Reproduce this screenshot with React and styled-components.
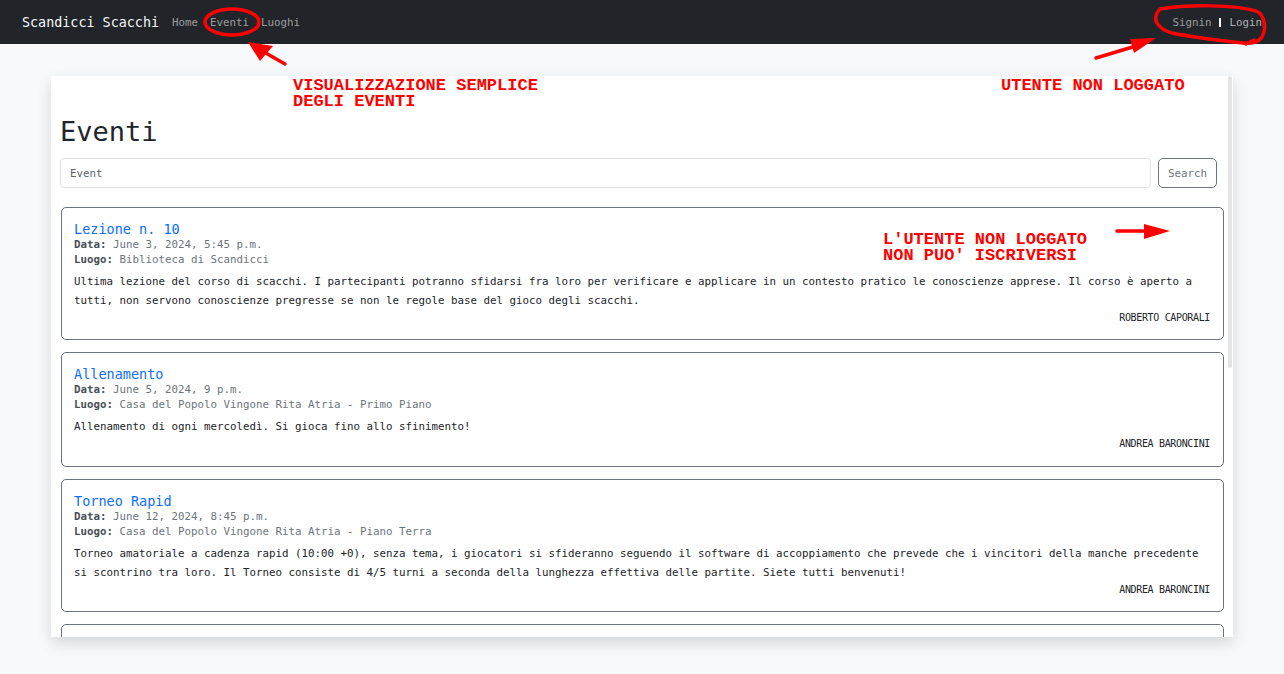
import React from "react";
import styled, { createGlobalStyle } from "styled-components";

const GlobalStyle = createGlobalStyle`
  html, body {
    margin: 0;
    padding: 0;
    background: #f8f9fa;
  }
  body {
    font-family: "DejaVu Sans Mono", "Liberation Mono", monospace;
    color: #212529;
  }
`;

const Page = styled.div`
  position: relative;
  width: 1284px;
  height: 674px;
  overflow: hidden;
`;

const Navbar = styled.nav`
  height: 44px;
  background: #212529;
  display: flex;
  align-items: center;
  padding: 0 22px;
  box-sizing: border-box;
`;

const Brand = styled.span`
  font-size: 13.4px;
  color: #f8f9fa;
  margin-right: 13px;
`;

const NavLinks = styled.div`
  display: flex;
  gap: 12px;
  flex: 1;
`;

const NavLink = styled.span`
  font-size: 10.8px;
  color: ${(props) => (props.light ? "rgba(255,255,255,0.65)" : "rgba(255,255,255,0.55)")};
`;

const AuthLinks = styled.div`
  display: flex;
  align-items: center;
  gap: 8px;
`;

const Divider = styled.span`
  width: 2px;
  height: 9px;
  background: #f8f9fa;
`;

const Main = styled.main`
  padding: 32px 51px 0;
`;

const Panel = styled.div`
  position: relative;
  background: #fff;
  height: 561px;
  box-shadow: 0 6px 14px rgba(0, 0, 0, 0.14);
  overflow: hidden;
`;

const Scroller = styled.div`
  height: 100%;
  overflow-y: auto;
  padding: 40px 9px 0 9px;
  box-sizing: border-box;
  scrollbar-width: none;
  &::-webkit-scrollbar {
    display: none;
  }
`;

/* thin scroll indicator on the panel's right edge */
const ScrollThumb = styled.div`
  position: absolute;
  right: 1px;
  top: 0;
  width: 4px;
  height: 292px;
  border-radius: 2px;
  background: #e4e4e4;
`;

const Title = styled.h1`
  font-size: 27px;
  font-weight: 400;
  line-height: 32px;
  margin: 0 0 10px;
`;

const SearchRow = styled.form`
  display: flex;
  gap: 7px;
  margin: 0 7px 19px 0;
`;

const SearchInput = styled.input`
  flex: 1;
  height: 30px;
  box-sizing: border-box;
  border: 1px solid #dee2e6;
  border-radius: 4px;
  padding: 0 9px;
  font-family: inherit;
  font-size: 10.8px;
  color: #212529;
  &::placeholder {
    color: #5c636a;
  }
`;

const SearchButton = styled.button`
  width: 59px;
  height: 30px;
  border: 1px solid #6c757d;
  border-radius: 5px;
  background: #fff;
  color: #6c757d;
  font-family: inherit;
  font-size: 10.8px;
`;

const CardList = styled.div`
  display: flex;
  flex-direction: column;
  gap: 12px;
  padding: 0 0 20px 1px;
`;

const Card = styled.div`
  border: 1px solid #6c757d;
  border-radius: 5px;
  padding: 14px 13px 13.4px 12px;
`;

const CardTitle = styled.div`
  font-size: 13.5px;
  line-height: 15px;
  color: #0d6efd;
`;

const Meta = styled.div`
  font-size: 10.8px;
  line-height: 15px;
  color: #6c757d;
  b {
    color: #495057;
  }
`;

const Body = styled.p`
  font-size: 10.8px;
  line-height: 19px;
  margin: 5px 0 0;
`;

const Author = styled.div`
  font-size: 10px;
  line-height: 16px;
  text-align: right;
  letter-spacing: -0.35px;
`;

const Note = styled.div`
  position: absolute;
  left: ${(props) => props.x}px;
  top: ${(props) => props.y}px;
  font-family: "Liberation Mono", monospace;
  font-weight: 700;
  font-size: 17px;
  line-height: 16px;
  color: #ff0000;
  white-space: pre;
`;

const Overlay = styled.svg`
  position: absolute;
  left: 0;
  top: 0;
  pointer-events: none;
`;

const events = [
  {
    title: "Lezione n. 10",
    date: "June 3, 2024, 5:45 p.m.",
    place: "Biblioteca di Scandicci",
    text: "Ultima lezione del corso di scacchi. I partecipanti potranno sfidarsi fra loro per verificare e applicare in un contesto pratico le conoscienze apprese. Il corso è aperto a tutti, non servono conoscienze pregresse se non le regole base del gioco degli scacchi.",
    author: "ROBERTO CAPORALI",
  },
  {
    title: "Allenamento",
    date: "June 5, 2024, 9 p.m.",
    place: "Casa del Popolo Vingone Rita Atria - Primo Piano",
    text: "Allenamento di ogni mercoledì. Si gioca fino allo sfinimento!",
    author: "ANDREA BARONCINI",
  },
  {
    title: "Torneo Rapid",
    date: "June 12, 2024, 8:45 p.m.",
    place: "Casa del Popolo Vingone Rita Atria - Piano Terra",
    text: "Torneo amatoriale a cadenza rapid (10:00 +0), senza tema, i giocatori si sfideranno seguendo il software di accoppiamento che prevede che i vincitori della manche precedente si scontrino tra loro. Il Torneo consiste di 4/5 turni a seconda della lunghezza effettiva delle partite. Siete tutti benvenuti!",
    author: "ANDREA BARONCINI",
  },
  {
    title: "Allenamento",
    date: "June 19, 2024, 9 p.m.",
    place: "Casa del Popolo Vingone Rita Atria - Primo Piano",
    text: "Allenamento di ogni mercoledì. Si gioca fino allo sfinimento!",
    author: "ANDREA BARONCINI",
  },
];

const App = () => {
  return (
    <Page>
      <GlobalStyle />
      <Navbar>
        <Brand>Scandicci Scacchi</Brand>
        <NavLinks>
          <NavLink>Home</NavLink>
          <NavLink>Eventi</NavLink>
          <NavLink>Luoghi</NavLink>
        </NavLinks>
        <AuthLinks>
          <NavLink>Signin</NavLink>
          <Divider />
          <NavLink light>Login</NavLink>
        </AuthLinks>
      </Navbar>
      <Main>
        <Panel>
          <Scroller>
            <Title>Eventi</Title>
            <SearchRow onSubmit={(e) => e.preventDefault()}>
              <SearchInput placeholder="Event" />
              <SearchButton>Search</SearchButton>
            </SearchRow>
            <CardList>
              {events.map((ev, i) => (
                <Card key={i}>
                  <CardTitle>{ev.title}</CardTitle>
                  <Meta>
                    <b>Data:</b> {ev.date}
                  </Meta>
                  <Meta>
                    <b>Luogo:</b> {ev.place}
                  </Meta>
                  <Body>{ev.text}</Body>
                  <Author>{ev.author}</Author>
                </Card>
              ))}
            </CardList>
          </Scroller>
          <ScrollThumb />
        </Panel>
      </Main>

      <Note x={293} y={78}>{"VISUALIZZAZIONE SEMPLICE\nDEGLI EVENTI"}</Note>
      <Note x={1001} y={78}>UTENTE NON LOGGATO</Note>
      <Note x={883} y={232}>{"L'UTENTE NON LOGGATO\nNON PUO' ISCRIVERSI"}</Note>

      <Overlay width="1284" height="674" viewBox="0 0 1284 674">
        <g fill="none" stroke="#ff0000" strokeWidth="3.5" strokeLinecap="round" strokeLinejoin="round">
          <ellipse cx="232" cy="22" rx="27" ry="13" />
          <path d="M1160 9 C1190 4 1235 5 1256 11 C1266 15 1266 30 1262 37 C1258 43 1250 44 1244 43 C1225 41 1195 38 1172 33 C1158 29 1153 20 1157 13 L1160 9" />
          <path d="M1254 40 L1246 44" />
          <line x1="285" y1="64" x2="264" y2="52" />
          <line x1="1096" y1="58" x2="1136" y2="46" />
          <line x1="1117" y1="231" x2="1150" y2="231" />
        </g>
        <g fill="#ff0000">
          <polygon points="248,42 273,46 260,61" />
          <polygon points="1156,38 1130,39 1134,53" />
          <polygon points="1170,231 1144,224 1144,239" />
        </g>
      </Overlay>
    </Page>
  );
};

export default App;
